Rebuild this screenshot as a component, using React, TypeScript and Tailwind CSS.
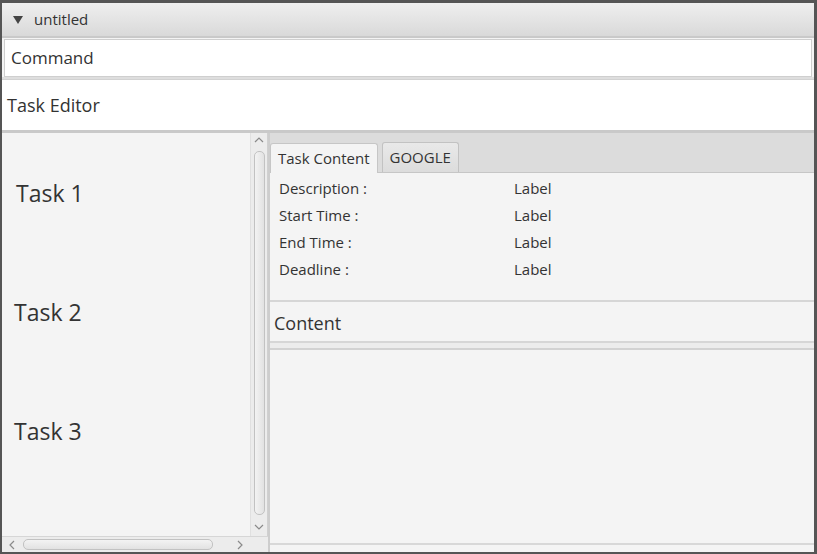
import React from 'react';

const FONT = { fontFamily: '"Open Sans", "Noto Sans", Arial, sans-serif' };

const FIELDS = ['Description :', 'Start Time :', 'End Time :', 'Deadline :'];
const TASKS = ['Task 1', 'Task 2', 'Task 3'];

function Chevron({ dir }: { dir: 'up' | 'down' | 'left' | 'right' }) {
  const d = {
    up: 'M1 6 L5 2 L9 6',
    down: 'M1 2 L5 6 L9 2',
    left: 'M6 1 L2 5 L6 9',
    right: 'M2 1 L6 5 L2 9',
  }[dir];
  return (
    <svg width="10" height="10" viewBox="0 0 10 10" fill="none">
      <path d={d} stroke="#8a8a8a" strokeWidth="1.2" />
    </svg>
  );
}

export default function App() {
  return (
    <div
      className="w-[817px] h-[554px] flex flex-col bg-[#f4f4f4] border-t-[3px] border-l-[2px] border-r-[3px] border-b-[2px] border-[#555555] text-[#333333] overflow-hidden"
      style={FONT}
    >
      {/* title bar */}
      <div className="h-[35px] shrink-0 flex items-center gap-[11px] pl-[11px] bg-gradient-to-b from-[#efefef] to-[#d9d9d9] border-b-[2px] border-[#c9c9c9]">
        <svg width="10" height="8" viewBox="0 0 10 8">
          <path d="M0 0 L10 0 L5 8 Z" fill="#444" />
        </svg>
        <span className="text-[15px] text-[#333]">untitled</span>
      </div>

      {/* command field */}
      <div className="bg-[#f4f4f4] px-[2px] pt-[1px] shrink-0">
        <div className="h-[38px] bg-white border border-[#cfcfcf] flex items-center pl-[6px] text-[17px] text-[#333]">
          Command
        </div>
      </div>
      <div className="h-[3px] shrink-0 bg-[#dedede] border-b border-[#d2d2d2]" />

      {/* task editor header */}
      <div className="h-[50px] shrink-0 bg-white flex items-center pl-[5px] text-[18px] text-[#333]">Task Editor</div>

      {/* main split */}
      <div className="flex-1 flex min-h-0 border-t-[3px] border-[#c9c9c9]">
        {/* left list with scrollbars */}
        <div className="w-[266px] flex flex-col">
          <div className="flex-1 flex min-h-0">
            <div className="flex-1 bg-[#f4f4f4] border-r border-[#e0e0e0] flex flex-col pt-[45px] pl-[12px] gap-[88px]">
              {TASKS.map((t, i) => (
                <div key={t} className={i === 0 ? 'text-[23px] leading-[31px] pl-[2px]' : 'text-[23px] leading-[31px]'}>
                  {t}
                </div>
              ))}
            </div>
            <div className="w-[17px] bg-[#ececec] border-r border-[#d0d0d0] flex flex-col items-center py-[3px]">
              <Chevron dir="up" />
              <div className="flex-1 w-[11px] mt-[5px] mb-[8px] rounded-[5px] border border-[#c2c2c2] bg-gradient-to-r from-[#f3f3f3] to-[#e2e2e2]" />
              <Chevron dir="down" />
            </div>
          </div>
          <div className="h-[16px] bg-[#ececec] border-t border-[#d6d6d6] flex items-center pl-[6px] pr-[22px] gap-[5px]">
            <Chevron dir="left" />
            <div className="w-[190px] h-[11px] rounded-[5px] border border-[#c2c2c2] bg-gradient-to-b from-[#f3f3f3] to-[#e2e2e2]" />
            <div className="flex-1" />
            <Chevron dir="right" />
          </div>
        </div>

        {/* right tab pane */}
        <div className="flex-1 flex flex-col border-l-[2px] border-[#cdcdcd]">
          <div className="h-[40px] shrink-0 bg-[#dcdcdc] flex items-end gap-[4px] border-b border-[#c6c6c6]">
            <div className="h-[30px] px-[7px] flex items-center bg-[#f4f4f4] border border-b-0 border-[#c6c6c6] rounded-t-[3px] text-[15px] text-[#333] -mb-px">
              Task Content
            </div>
            <div className="h-[30px] px-[7px] flex items-center bg-gradient-to-b from-[#e9e9e9] to-[#dcdcdc] border border-b-0 border-[#c2c2c2] rounded-t-[3px] text-[15px] text-[#333]">
              GOOGLE
            </div>
          </div>

          <div className="h-[129px] shrink-0 bg-[#f4f4f4] flex flex-col pt-[2px] pl-[9px] border-b-[2px] border-[#d6d6d6]">
            {FIELDS.map(f => (
              <div key={f} className="flex h-[27px] items-center text-[15px] text-[#333]">
                <span className="w-[235px]">{f}</span>
                <span>Label</span>
              </div>
            ))}
          </div>

          <div className="h-[41px] shrink-0 flex items-center pt-[4px] pl-[4px] text-[18px] text-[#333] bg-[#f4f4f4] border-b-[2px] border-[#d6d6d6]">
            Content
          </div>
          <div className="h-[7px] shrink-0 bg-[#ececec] border-b-[2px] border-[#d2d2d2]" />
          <div className="flex-1 bg-[#f4f4f4] border-b-[2px] border-[#d8d8d8]" />
          <div className="h-[7px] shrink-0 bg-[#f4f4f4]" />
        </div>
      </div>
    </div>
  );
}
